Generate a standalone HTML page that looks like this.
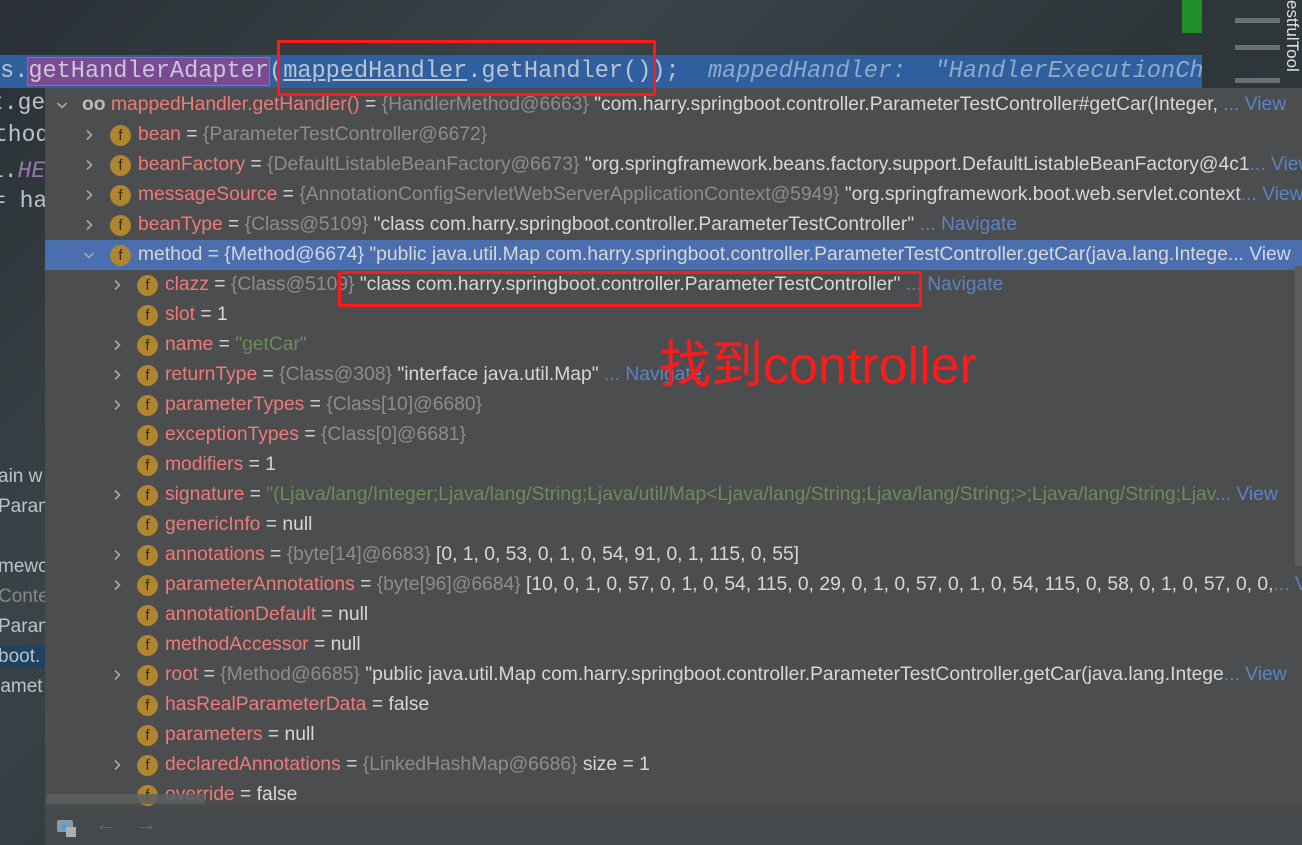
<!DOCTYPE html>
<html><head><meta charset="utf-8"><style>
*{margin:0;padding:0;box-sizing:border-box}
body{width:1302px;height:845px;overflow:hidden;background:#2e3438;position:relative;font-family:"Liberation Sans","Noto Sans CJK SC",sans-serif}
.bg{position:absolute;left:0;top:0;width:1302px;height:845px;background:linear-gradient(135deg,#2a3035 0%,#3a4448 30%,#2d3539 55%,#323b3f 80%,#2a2f33 100%)}
.code{position:absolute;left:0;top:55px;width:1202px;height:33px;background:#2f5f9e;font-family:"Liberation Mono",monospace;font-size:23.6px;line-height:33px;color:#b9c4cf;white-space:pre;overflow:hidden}
.code .hl{background:#7a4a92;outline:1px solid #a060b8;color:#c9c6d9}
.code i{color:#8fa9c8}
.code .u{text-decoration:underline}
.left{position:absolute;left:0;top:88px;width:45px;height:757px;font-family:"Liberation Mono",monospace;font-size:23px;color:#bcc3c8;overflow:hidden}
.left div{position:absolute;white-space:pre}
.panel{position:absolute;left:45px;top:88px;width:1257px;height:720px;background:#4b4d4e;overflow:hidden}
.bar{position:absolute;left:45px;top:807px;width:1257px;height:38px;background:#46494b}
.row{position:absolute;left:0;margin-top:2px;height:30px;width:1257px;line-height:30px;font-size:19.3px;color:#d7d7d7;white-space:nowrap}
.row.sel{background:#4b6eaf}
.arr{position:absolute;top:9px;width:12px;height:12px}
.ic{position:absolute;top:5px;width:21px;height:21px;border-radius:50%;background:#b08530;color:#3a2a10;font-size:15px;line-height:21px;text-align:center;font-family:"Liberation Sans",sans-serif}
.t{position:absolute;top:0}
.n{color:#f07a7a}
.sel .n{color:#d6d6d6}
.g{color:#8d8d8d}
.sel .g{color:#d0d6e6}
.s{color:#6e8b59}
.v{color:#5c84c4}
.sel .v{color:#d0d8f0}
.rb{position:absolute;border:3px solid #ff1a1a;border-radius:2px}
</style></head><body>
<svg width="0" height="0" style="position:absolute"><defs>
<symbol id="r" viewBox="0 0 12 12"><path d="M4 1.5 L8.5 6 L4 10.5" stroke="#a8a8a8" stroke-width="1.6" fill="none"/></symbol>
<symbol id="d" viewBox="0 0 12 12"><path d="M1.5 4 L6 8.5 L10.5 4" stroke="#a8a8a8" stroke-width="1.6" fill="none"/></symbol>
</defs></svg>
<div class="bg"></div>
<div style="position:absolute;left:1182px;top:0;width:20px;height:33px;background:#1f8f2a"></div>
<div style="position:absolute;left:1235px;top:18px;width:45px;height:5px;background:#6a6f72"></div>
<div style="position:absolute;left:1235px;top:45px;width:45px;height:5px;background:#6a6f72"></div>
<div style="position:absolute;left:1235px;top:78px;width:45px;height:5px;background:#6a6f72"></div>
<div style="position:absolute;left:1283px;top:0;width:19px;height:75px;color:#e0e0e0;font-size:17px;writing-mode:vertical-rl">estfulTool</div>
<div class="code">s.<span class="hl">getHandlerAdapter</span>(<span class="u">mappedHandler</span>.getHandler());  <i>mappedHandler:  "HandlerExecutionCha</i></div>
<div class="left">
<div style="top:2px;left:-10px">t.ge</div>
<div style="top:34px;left:-6px">thod</div>
<div style="top:70px;left:-10px">l.<i style="color:#9876aa">HE</i></div>
<div style="top:100px;left:-8px">= ha</div>
<div style="top:378px;left:-2px;font-family:'Liberation Sans';font-size:19px">ain w</div>
<div style="top:408px;left:-2px;font-family:'Liberation Sans';font-size:19px">Param</div>
<div style="top:468px;left:-2px;font-family:'Liberation Sans';font-size:19px">mewo</div>
<div style="top:498px;left:-2px;font-family:'Liberation Sans';font-size:19px;color:#888">Conte</div>
<div style="top:528px;left:-2px;font-family:'Liberation Sans';font-size:19px">Param</div>
<div style="top:558px;left:-2px;width:47px;font-family:'Liberation Sans';font-size:19px;background:#1e4260">boot.</div>
<div style="top:588px;left:-6px;font-family:'Liberation Sans';font-size:19px">ramet</div>
</div>
<div class="panel">
<div class="row" style="top:0"><svg class="arr" style="left:11px"><use href="#d"/></svg><span class="t" style="left:37px;color:#bbb;font-weight:bold">oo</span><span class="t" style="left:66px"><span class="n">mappedHandler.getHandler()</span> = <span class="g">{HandlerMethod@6663}</span> "com.harry.springboot.controller.ParameterTestController#getCar(Integer, <span class="v">... View</span></span></div>
<div class="row" style="top:30px"><svg class="arr" style="left:38px"><use href="#r"/></svg><span class="ic" style="left:65px">f</span><span class="t" style="left:93px"><span class="n">bean</span> = <span class="g">{ParameterTestController@6672}</span></span></div>
<div class="row" style="top:60px"><svg class="arr" style="left:38px"><use href="#r"/></svg><span class="ic" style="left:65px">f</span><span class="t" style="left:93px"><span class="n">beanFactory</span> = <span class="g">{DefaultListableBeanFactory@6673}</span> "org.springframework.beans.factory.support.DefaultListableBeanFactory@4c1<span class="v">... View</span></span></div>
<div class="row" style="top:90px"><svg class="arr" style="left:38px"><use href="#r"/></svg><span class="ic" style="left:65px">f</span><span class="t" style="left:93px"><span class="n">messageSource</span> = <span class="g">{AnnotationConfigServletWebServerApplicationContext@5949}</span> "org.springframework.boot.web.servlet.context<span class="v">... View</span></span></div>
<div class="row" style="top:120px"><svg class="arr" style="left:38px"><use href="#r"/></svg><span class="ic" style="left:65px">f</span><span class="t" style="left:93px"><span class="n">beanType</span> = <span class="g">{Class@5109}</span> "class com.harry.springboot.controller.ParameterTestController" <span class="v">... Navigate</span></span></div>
<div class="row sel" style="top:150px"><svg class="arr" style="left:38px"><use href="#d"/></svg><span class="ic" style="left:65px">f</span><span class="t" style="left:93px"><span class="n">method</span> = <span class="g">{Method@6674}</span> "public java.util.Map com.harry.springboot.controller.ParameterTestController.getCar(java.lang.Intege<span class="v">... View</span></span></div>
<div class="row" style="top:180px"><svg class="arr" style="left:66px"><use href="#r"/></svg><span class="ic" style="left:92px">f</span><span class="t" style="left:120px"><span class="n">clazz</span> = <span class="g">{Class@5109}</span> "class com.harry.springboot.controller.ParameterTestController" <span class="v">... Navigate</span></span></div>
<div class="row" style="top:210px"><span class="ic" style="left:92px">f</span><span class="t" style="left:120px"><span class="n">slot</span> = 1</span></div>
<div class="row" style="top:240px"><svg class="arr" style="left:66px"><use href="#r"/></svg><span class="ic" style="left:92px">f</span><span class="t" style="left:120px"><span class="n">name</span> = <span class="s">"getCar"</span></span></div>
<div class="row" style="top:270px"><svg class="arr" style="left:66px"><use href="#r"/></svg><span class="ic" style="left:92px">f</span><span class="t" style="left:120px"><span class="n">returnType</span> = <span class="g">{Class@308}</span> "interface java.util.Map" <span class="v">... Navigate</span></span></div>
<div class="row" style="top:300px"><svg class="arr" style="left:66px"><use href="#r"/></svg><span class="ic" style="left:92px">f</span><span class="t" style="left:120px"><span class="n">parameterTypes</span> = <span class="g">{Class[10]@6680}</span></span></div>
<div class="row" style="top:330px"><span class="ic" style="left:92px">f</span><span class="t" style="left:120px"><span class="n">exceptionTypes</span> = <span class="g">{Class[0]@6681}</span></span></div>
<div class="row" style="top:360px"><span class="ic" style="left:92px">f</span><span class="t" style="left:120px"><span class="n">modifiers</span> = 1</span></div>
<div class="row" style="top:390px"><svg class="arr" style="left:66px"><use href="#r"/></svg><span class="ic" style="left:92px">f</span><span class="t" style="left:120px"><span class="n">signature</span> = <span class="s">"(Ljava/lang/Integer;Ljava/lang/String;Ljava/util/Map&lt;Ljava/lang/String;Ljava/lang/String;&gt;;Ljava/lang/String;Ljav</span><span class="v">... View</span></span></div>
<div class="row" style="top:420px"><span class="ic" style="left:92px">f</span><span class="t" style="left:120px"><span class="n">genericInfo</span> = null</span></div>
<div class="row" style="top:450px"><svg class="arr" style="left:66px"><use href="#r"/></svg><span class="ic" style="left:92px">f</span><span class="t" style="left:120px"><span class="n">annotations</span> = <span class="g">{byte[14]@6683}</span> [0, 1, 0, 53, 0, 1, 0, 54, 91, 0, 1, 115, 0, 55]</span></div>
<div class="row" style="top:480px"><svg class="arr" style="left:66px"><use href="#r"/></svg><span class="ic" style="left:92px">f</span><span class="t" style="left:120px"><span class="n">parameterAnnotations</span> = <span class="g">{byte[96]@6684}</span> [10, 0, 1, 0, 57, 0, 1, 0, 54, 115, 0, 29, 0, 1, 0, 57, 0, 1, 0, 54, 115, 0, 58, 0, 1, 0, 57, 0, 0,<span class="v">... View</span></span></div>
<div class="row" style="top:510px"><span class="ic" style="left:92px">f</span><span class="t" style="left:120px"><span class="n">annotationDefault</span> = null</span></div>
<div class="row" style="top:540px"><span class="ic" style="left:92px">f</span><span class="t" style="left:120px"><span class="n">methodAccessor</span> = null</span></div>
<div class="row" style="top:570px"><svg class="arr" style="left:66px"><use href="#r"/></svg><span class="ic" style="left:92px">f</span><span class="t" style="left:120px"><span class="n">root</span> = <span class="g">{Method@6685}</span> "public java.util.Map com.harry.springboot.controller.ParameterTestController.getCar(java.lang.Intege<span class="v">... View</span></span></div>
<div class="row" style="top:600px"><span class="ic" style="left:92px">f</span><span class="t" style="left:120px"><span class="n">hasRealParameterData</span> = false</span></div>
<div class="row" style="top:630px"><span class="ic" style="left:92px">f</span><span class="t" style="left:120px"><span class="n">parameters</span> = null</span></div>
<div class="row" style="top:660px"><svg class="arr" style="left:66px"><use href="#r"/></svg><span class="ic" style="left:92px">f</span><span class="t" style="left:120px"><span class="n">declaredAnnotations</span> = <span class="g">{LinkedHashMap@6686}</span>  size = 1</span></div>
<div class="row" style="top:690px"><span class="ic" style="left:92px">f</span><span class="t" style="left:120px"><span class="n">override</span> = false</span></div>
<div style="position:absolute;left:2px;top:706px;width:158px;height:10px;background:#5d6062;opacity:.85"></div>
<div style="position:absolute;left:1250px;top:178px;width:7px;height:300px;background:#5a5c5e"></div>
</div>
<div class="bar">
<div style="position:absolute;left:12px;top:13px;width:16px;height:12px;background:#8a9aa8;border-radius:2px"></div>
<div style="position:absolute;left:16px;top:17px;width:6px;height:6px;background:#3ba4e8;border-radius:50%"></div>
<div style="position:absolute;left:21px;top:20px;width:10px;height:10px;background:#a8b0b8"></div>
<div style="position:absolute;left:50px;top:4px;color:#666a6d;font-size:22px">←</div>
<div style="position:absolute;left:90px;top:4px;color:#666a6d;font-size:22px">→</div>
</div>
<div class="rb" style="left:277px;top:40px;width:379px;height:56px"></div>
<div class="rb" style="left:338px;top:271px;width:584px;height:36px"></div>
<div style="position:absolute;left:659px;top:334px;color:#ff1a1a;font-size:52px;line-height:64px;white-space:nowrap">找到controller</div>
</body></html>
